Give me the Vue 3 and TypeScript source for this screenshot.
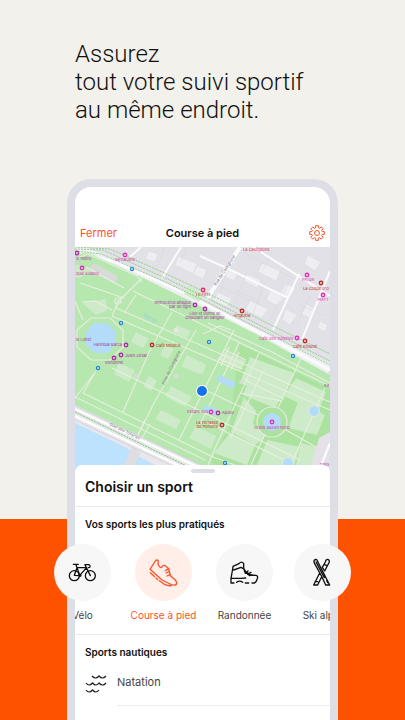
<script setup lang="ts">
interface Poi {
  x: number
  y: number
  color: string
  lines: string[]
  tx: number
  ty: number
  anchor: 'start' | 'middle' | 'end'
}

const purple = '#a8329f'
const pink = '#d936b0'
const red = '#b8322a'
const rose = '#e0355e'

const pois: Poi[] = [
  { x: 77, y: 253, color: purple, lines: ['le métro'], tx: 76, ty: 260, anchor: 'start' },
  { x: 82, y: 268, color: pink, lines: ['quai à ballot'], tx: 76, ty: 275, anchor: 'start' },
  { x: 125, y: 255, color: pink, lines: ['Sarbacane'], tx: 125, ty: 261, anchor: 'middle' },
  { x: 203, y: 290, color: rose, lines: ['Le First'], tx: 203, ty: 296, anchor: 'middle' },
  { x: 195, y: 305, color: purple, lines: ['Rhinocéros attaqué', 'par un tigre'], tx: 191, ty: 304, anchor: 'end' },
  { x: 205, y: 309, color: purple, lines: ['Lion et lionne se', 'disputant un sanglier'], tx: 205, ty: 315, anchor: 'middle' },
  { x: 242, y: 311, color: red, lines: ['Angelina'], tx: 242, ty: 317, anchor: 'middle' },
  { x: 307, y: 275, color: pink, lines: ['PA/GR'], tx: 308, ty: 281, anchor: 'middle' },
  { x: 321, y: 283, color: red, lines: ["La Coupe d'O"], tx: 329, ty: 290, anchor: 'end' },
  { x: 323, y: 295, color: pink, lines: ['PIATT'], tx: 323, ty: 301, anchor: 'middle' },
  { x: 297, y: 338, color: pink, lines: ['Café des Tuileries'], tx: 293, ty: 340, anchor: 'end' },
  { x: 305, y: 341, color: red, lines: ['Café Kitsuné'], tx: 305, ty: 348, anchor: 'middle' },
  { x: 126, y: 345, color: purple, lines: ['Hannibal Barca'], tx: 122, ty: 346, anchor: 'end' },
  { x: 152, y: 345, color: red, lines: ['Café Médicis'], tx: 156, ty: 347, anchor: 'start' },
  { x: 121, y: 355, color: purple, lines: ['Jules César'], tx: 125, ty: 357, anchor: 'start' },
  { x: 114, y: 358, color: purple, lines: ['Vertumne'], tx: 114, ty: 364, anchor: 'middle' },
  { x: 211, y: 412, color: pink, lines: ['Exèdre sud'], tx: 208, ty: 413, anchor: 'end' },
  { x: 218, y: 413, color: purple, lines: ['Apollo'], tx: 222, ty: 414, anchor: 'start' },
  { x: 222, y: 425, color: red, lines: ['La Terrasse', 'de Pomone'], tx: 218, ty: 424, anchor: 'end' },
  { x: 272, y: 422, color: pink, lines: ['Grand Bassin Rond'], tx: 272, ty: 429, anchor: 'middle' }
]

const stops = [
  [132, 269],
  [121, 323],
  [98, 368],
  [209, 342],
  [293, 356],
  [225, 463]
]

const lawns = [
  '76,264 92,270 80,278 75,277',
  '82,303 106,299 107,311 96,315',
  '136,332 149,339 143,348 131,342',
  '188,286 204,294 199,302 184,294',
  '119,363 135,370 129,382 114,374',
  '149,376 157,381 151,391 143,386',
  '187,355 205,364 199,374 181,366',
  '171,386 192,397 185,407 165,396',
  '161,410 181,420 176,429 155,419',
  '196,426 216,436 211,449 189,438',
  '165,345 174,349 168,359 160,355',
  '199,361 206,365 203,374 199,373',
  '224,352 246,361 241,370 217,359',
  '250,357 294,373 283,399 240,383',
  '248,382 281,398 275,408 243,395',
  '296,378 326,392 318,412 284,396',
  '244,397 256,411 253,424 265,437 255,445 231,432',
  '299,400 325,415 317,435 288,428',
  '267,440 300,447 294,465 257,465',
  '301,443 322,449 311,465 296,465',
  '230,433 255,446 247,465 214,453',
  '177,325 191,331 187,338 173,332'
]

const paths = [
  'M75 259 L88 254 L137 276 L142 282',
  'M86 267 L124 288',
  'M80 283 L124 298',
  'M142 278 L118 302 L112 316',
  'M133 291 L330 386',
  'M136 295 L124 313',
  'M118 300 L116 308 L330 402',
  'M112 316 L330 410',
  'M75 301 L83 320',
  'M82 302 L95 301 L112 310',
  'M94 374 L75 398',
  'M112 368 L227 424 L300 460',
  'M83 393 L96 371',
  'M83 393 L213 457 L235 465',
  'M75 397 L205 460',
  'M172 312 L150 350 L123 412',
  'M196 330 L154 403 L136 439',
  'M145 420 L137 437 M150 424 L141 440',
  'M234 330 L179 440',
  'M239 343 L212 400 L198 428',
  'M259 353 L216 446 L208 465',
  'M263 371 L231 437',
  'M301 358 L278 408',
  'M325 388 L292 462',
  'M265 434 L251 465',
  'M208 323 L270 351 L330 383',
  'M225 350 L246 360 M229 347 L221 366 M239 352 L231 370 M219 359 L243 369',
  'M245 380 L284 399 M240 393 L282 401',
  'M207 391 L258 415',
  'M206 422 L290 463',
  'M286 430 L330 455',
  'M203 334 L220 326 L231 330'
]

const blocks = [
  '149,251 158,254 155,262 145,259',
  '178,256 197,264 193,274 175,265',
  '197,266 207,270 203,279 193,274',
  '247,274 261,280 257,288 244,281',
  '262,263 281,270 276,281 258,272',
  '218,292 232,299 227,307 213,300',
  '250,300 268,309 262,318 245,310',
  '286,283 296,288 289,299 280,294',
  '270,290 284,297 278,306 266,300',
  '308,255 321,262 315,271 304,264',
  '306,304 315,309 310,318 301,314',
  '320,321 328,325 325,332 317,328',
  '226,267 238,273 234,281 222,275',
  '286,309 297,315 290,325 282,320'
]

const gearPath = ((): string => {
  const pts: string[] = []
  for (let i = 0; i < 8; i++) {
    const mid = (i * Math.PI) / 4
    const corners: [number, number][] = [
      [-0.27, 8],
      [-0.18, 11.2],
      [0.18, 11.2],
      [0.27, 8]
    ]
    for (const [d, r] of corners) {
      pts.push(`${(12 + r * Math.sin(mid + d)).toFixed(2)} ${(12 - r * Math.cos(mid + d)).toFixed(2)}`)
    }
  }
  return `M${pts.join('L')}Z`
})()

const sports = [
  { id: 'velo', name: 'Vélo', active: false },
  { id: 'course', name: 'Course à pied', active: true },
  { id: 'randonnee', name: 'Randonnée', active: false },
  { id: 'ski', name: 'Ski alpin', active: false }
]
</script>

<template>
  <main class="page">
    <h1 class="headline">Assurez<br />tout votre suivi sportif<br />au même endroit.</h1>

    <div class="phone">
      <header class="bar">
        <button type="button" class="close">Fermer</button>
        <h2 class="bar-title">Course à pied</h2>
        <button type="button" class="gear" aria-label="Réglages">
          <svg viewBox="0 0 24 24" fill="none" stroke="currentColor" stroke-width="1.5" stroke-linejoin="round">
            <path :d="gearPath" />
            <circle cx="12" cy="12" r="3.7" />
          </svg>
        </button>
      </header>

      <svg class="map" viewBox="75 247 255 226" preserveAspectRatio="xMidYMin slice">
        <rect x="75" y="247" width="255" height="226" fill="#e2e1e7" />
        <g fill="#eeedf1" stroke="#d8d7dd" stroke-width=".5">
          <polygon v-for="b in blocks" :key="b" :points="b" />
        </g>
        <g stroke="#d6d5dc" stroke-width=".5" fill="none">
          <path d="M165 247L155 272M187 247L180 262M230 262L220 292M248 270L235 303M265 282L252 316M272 252L263 270M210 282L262 306M244 253L297 280M290 280L270 320M300 305L325 316M310 295L297 325M235 290L260 302" />
        </g>
        <g stroke="#fbfbfd" fill="none">
          <path d="M75 247L330 369" stroke-width="10" stroke="#efeff3" />
          <path d="M141 247L130 257M181 247L162 278M253 247L330 296M200 256L229 269L288 298M299 274L273 330M330 271L301 342" stroke-width="2" />
          <path d="M240 247L207 299" stroke-width="4" />
          <path d="M75 253L116 262L180 291L260 333L330 370" stroke-width="3" />
        </g>

        <path d="M75 254L89 253L137 275L180 296L260 336L330 375V440L319 445L308 473H215L75 406Z" fill="#b6e7ae" />
        <path d="M239 344L330 389V437L319 444L306 473H222L211 462L230 424Z" fill="#abe29f" />
        <g fill="#cdebc8">
          <polygon v-for="l in lawns" :key="l" :points="l" />
        </g>
        <path d="M94 263L118 276L115 284L87 270Z" fill="#d6dbd6" />

        <g class="dashes">
          <path d="M75 249L103 250L163 277L205 297L273 332L330 361" />
          <path d="M75 251L101 254L163 281L205 301L273 336L330 365" />
          <path d="M75 247L110 249L160 271L205 292L275 327L330 354" />
        </g>

        <g fill="none" stroke="#e9eee1" stroke-width="1.1" stroke-linejoin="round">
          <path v-for="p in paths" :key="p" :d="p" />
        </g>
        <circle cx="118" cy="301" r="3" class="plaza" />
        <path d="M91 318L110 318L123 330L123 347L110 360H91L77 347V330Z" class="plaza" />
        <path d="M94 323H107L116 332V344L108 353H94L86 345V332Z" class="water" />
        <circle cx="272" cy="422" r="15" class="plaza" />
        <circle cx="272" cy="422" r="9" class="water" />
        <circle cx="314" cy="411" r="5.5" class="water ringed" />
        <circle cx="288" cy="463" r="5.5" class="water ringed" />
        <rect x="217" y="378" width="19" height="7" rx="3" transform="rotate(25 226 381)" class="water" />
        <rect x="203" y="407" width="15" height="6" rx="3" transform="rotate(22 210 410)" class="water" />
        <circle cx="176" cy="376" r="2.5" fill="#d6ddd5" />
        <circle cx="176" cy="330" r="2.5" fill="#e3e8df" />
        <circle cx="136" cy="376" r="2" fill="#d6ddd5" />
        <circle cx="241" cy="382" r="2" fill="#d6ddd5" />
        <path d="M145 313l7 4-2 3-7-4zM153 318l4 2-2 3-4-2z" fill="#a6ddc3" />

        <path d="M75 405L205 467V473H75Z" fill="#e8e7ed" />
        <path d="M75 423L127 448L134 454L170 473H75Z" fill="#bce2fd" />
        <path d="M132 446L121 473H130L141 453Z" fill="#dedde2" />
        <g fill="none" stroke="#fff" stroke-width="2.2">
          <path d="M75 409L200 468M75 416L190 471" />
        </g>
        <path d="M75 420L173 466M75 406L205 467" fill="none" stroke="#cccad3" stroke-width=".7" />
        <path d="M75 412L193 469" class="dashed" />
        <path d="M319 438L330 432V473H309Z" fill="#e4e2e8" />
        <path d="M330 443L318 473" stroke="#fff" stroke-width="2" />

        <g class="road-names">
          <text transform="translate(216 286) rotate(-57)">Rue de Castiglione</text>
          <text transform="translate(164 385) rotate(-64)">Allée de Castiglione</text>
          <text transform="translate(109 425) rotate(26)">Quai des Tuileries</text>
        </g>
        <g class="poi-names">
          <text x="243" y="251" fill="#e0355e">La Castiglione</text>
          <text x="76" y="341" fill="#a8329f">le Loiret</text>
          <text x="329" y="387" fill="#a8329f" text-anchor="end">Ad</text>
          <text x="329" y="466" fill="#a8329f" text-anchor="end">Thés</text>
        </g>
        <g v-for="s in stops" :key="s.join()">
          <circle :cx="s[0]" :cy="s[1]" r="2.2" fill="#2785d8" />
          <circle :cx="s[0]" :cy="s[1]" r=".9" fill="#d5ecfb" />
        </g>
        <g v-for="p in pois" :key="p.lines[0]" class="poi-names">
          <circle :cx="p.x" :cy="p.y" r="2.4" :fill="p.color" />
          <circle :cx="p.x" :cy="p.y" r=".9" fill="#fbe3f5" />
          <text v-for="(line, i) in p.lines" :key="line" :x="p.tx" :y="p.ty + i * 4" :fill="p.color" :text-anchor="p.anchor">{{ line }}</text>
        </g>
        <circle cx="202" cy="391" r="6" fill="#fff" />
        <circle cx="202" cy="391" r="5" fill="#1473e6" />
      </svg>

      <section class="sheet">
        <div class="handle"></div>
        <h2 class="sheet-title">Choisir un sport</h2>

        <h3 class="group-title practised">Vos sports les plus pratiqués</h3>
        <div class="discs">
          <button v-for="s in sports" :id="s.id" :key="s.id" type="button" class="disc" :class="{ active: s.active }">
            <svg v-if="s.id === 'velo'" viewBox="12 28 171 171" class="icon">
              <circle cx="73" cy="123" r="15" />
              <circle cx="121" cy="123" r="15" />
              <path d="M70 89H85M78 90L89 122L110 99M81 99H109L121 123M81 99L73 122L89 123M109 99L105 90H115Q121 91 120 96Q119 99 115 99" />
              <circle cx="90" cy="122" r="3" />
            </svg>
            <svg v-else-if="s.id === 'course'" viewBox="257 28 171 171" class="icon">
              <path d="M302 104L318 79Q323 73 327 79L326 88Q331 102 338 97Q341 89 349 94L358 102L363 123L377 135Q384 143 381 149Q374 154 362 148L338 136L302 104Z" />
              <path d="M303 114L316 126M320 130L325 135M330 138L345 149Q355 154 366 153M358 102L348 108M360 110L350 115M363 119L353 124" />
            </svg>
            <svg v-else-if="s.id === 'randonnee'" viewBox="50 28 171 171" class="icon">
              <path d="M95 131L100 103L101 95L119 87Q127 78 133 87L133 101L139 111L154 121L170 122Q177 124 174 132Q171 143 165 145H158M95 131V145H104M112 143Q121 136 130 143M138 145H148M96 131H125L139 130M103 106L125 98L132 102M133 101L138 116L145 116L150 123L158 121M138 116L146 109M145 119L155 113" />
            </svg>
            <svg v-else viewBox="284 28 171 171" class="icon">
              <path d="M344 82Q343 76 349 74Q354 74 355 81L391 151H379L368 127L346 87ZM390 82Q391 76 386 74Q380 73 378 82L369 98L376 109ZM361 115L343 151H355L367 126M382 137L385 144M350 82L375 129M347 141H355M374 89L383 93" />
            </svg>
          </button>
        </div>
        <div class="names">
          <label v-for="s in sports" :key="s.id" :for="s.id" :class="{ active: s.active }"><span>{{ s.name }}</span></label>
        </div>

        <h3 class="group-title nautical">Sports nautiques</h3>
        <a href="#natation" class="row">
          <svg viewBox="0 0 22 18" class="waves">
            <path d="M7 2Q10.500 6 14 2Q17.500 6 21 2M1 9Q4 13 7.500 9Q11 13 14 9Q17.500 13 21 9M1 16Q4 20 7.500 16Q11 20 14 16" />
          </svg>
          <span class="row-name">Natation</span>
        </a>
      </section>
    </div>
  </main>
</template>

<style>
body {
  margin: 0;
}
</style>

<style scoped>
.page {
  height: 100vh;
  overflow: hidden;
  box-sizing: border-box;
  display: flex;
  flex-direction: column;
  padding: 40px 67px 0;
  background: linear-gradient(#f3f1ec 72.1%, #ff5200 72.1%);
  font-family: Inter, "Liberation Sans", sans-serif;
  color: #101010;
}

h1,
h2,
h3 {
  margin: 0;
}

button {
  padding: 0;
  border: 0;
  background: none;
  font: inherit;
  color: inherit;
}

.headline {
  padding-left: 8px;
  font-family: Roboto, "Liberation Sans", sans-serif;
  font-size: 24px;
  line-height: 28px;
  font-weight: 300;
  white-space: nowrap;
}

.phone {
  flex: 1 0 auto;
  margin-top: 55px;
  border: 8px solid #dedee7;
  border-bottom: 0;
  border-radius: 24px 24px 0 0;
  background: #fff;
}

.bar {
  display: grid;
  grid-template-columns: 1fr auto 1fr;
  align-items: center;
  height: 29px;
  padding: 31px 5px 0;
  font-size: 11px;
}

.close {
  justify-self: start;
  color: #f8532a;
}

.bar-title {
  font-size: 11px;
  font-weight: 600;
}

.gear {
  justify-self: end;
  width: 16px;
  height: 16px;
  color: #f8532a;
}

.gear svg {
  display: block;
}

.map {
  display: block;
  width: 100%;
  height: 226px;
}

.dashes {
  fill: none;
  stroke: #7ccb6d;
  stroke-width: 0.8;
  stroke-dasharray: 2 1;
}

.dashed {
  fill: none;
  stroke: #71ca62;
  stroke-width: 1;
  stroke-dasharray: 2 1;
}

.plaza {
  fill: none;
  stroke: #e6ecdf;
  stroke-width: 1.2;
}

.water {
  fill: #b3dcf8;
}

.ringed {
  stroke: #e2eadf;
}

.road-names {
  fill: #77757d;
  font-size: 4px;
}

.poi-names {
  font-size: 4px;
}

.sheet {
  position: relative;
  margin-top: -8px;
  padding-top: 4px;
  border-radius: 7px 7px 0 0;
  background: #fff;
}

.handle {
  width: 24px;
  height: 4px;
  margin: 0 auto;
  border-radius: 2px;
  background: #dedee7;
}

.sheet-title {
  padding: 4px 10px 9px;
  border-bottom: 1px solid #ebebee;
  font-size: 14px;
  line-height: 20px;
  font-weight: 600;
}

.group-title {
  padding: 0 10px;
  font-size: 10px;
  line-height: 16px;
  font-weight: 600;
}

.practised {
  margin-top: 9px;
}

.discs,
.names {
  display: grid;
}

.discs {
  grid-template-columns: 81fr 81fr 78fr 57fr;
  margin: 12px -21px 0;
}

.disc {
  width: 57px;
  height: 57px;
  border-radius: 50%;
  background: #f7f7f7;
}

.disc.active {
  background: #ffefe8;
  color: #f8532a;
}

.icon {
  display: block;
  fill: none;
  stroke: currentColor;
  stroke-width: 4;
  stroke-linejoin: round;
  stroke-linecap: round;
}

.names {
  overflow: hidden;
  grid-template-columns: minmax(0, 60fr) minmax(0, 81fr) minmax(0, 78fr) minmax(0, 36fr);
  padding: 6px 0 11px;
  border-bottom: 1px solid #ebebee;
  font-size: 10px;
  line-height: 16px;
  color: #444;
}

.names label {
  display: flex;
  justify-content: center;
  width: 57px;
  white-space: nowrap;
}

.names label:first-child {
  margin-left: -21px;
}

.names .active {
  color: #f8532a;
}

.nautical {
  margin-top: 9px;
}

.row {
  display: flex;
  align-items: center;
  gap: 10px;
  padding-left: 10px;
  font-size: 11px;
  color: #444;
  text-decoration: none;
}

.waves {
  width: 22px;
  height: 18px;
  overflow: visible;
  fill: none;
  stroke: #222;
  stroke-width: 1.2;
}

.row-name {
  flex: 1;
  line-height: 45px;
  border-bottom: 1px solid #ebebee;
}
</style>
